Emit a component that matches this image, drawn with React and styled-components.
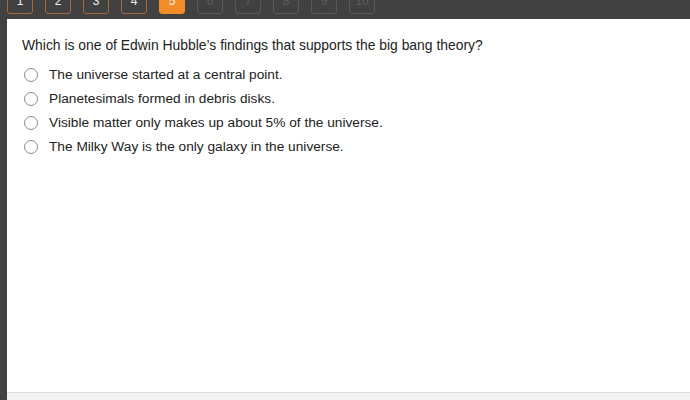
import React from "react";
import styled, { createGlobalStyle } from "styled-components";

const Global = createGlobalStyle`
  html, body { margin: 0; padding: 0; background: #404040; }
  body { font-family: "Liberation Sans", Arial, sans-serif; }
`;

const Page = styled.div`
  width: 690px;
  height: 400px;
  display: flex;
  flex-direction: column;
  overflow: hidden;
  background: #414141;
`;

const NavBar = styled.div`
  height: 19px;
  flex: none;
  display: flex;
  align-items: flex-end;
  gap: 12px;
  padding: 0 0 5px 7px;
  box-sizing: border-box;
  overflow: hidden;
`;

const PageButton = styled.div`
  flex: none;
  width: 26px;
  height: 26px;
  box-sizing: border-box;
  border-radius: 3px;
  display: flex;
  align-items: flex-start;
  justify-content: center;
  padding-top: 6px;
  font-size: 12px;
  line-height: 13px;
  border: 1px solid ${(p) => (p.$state === "done" ? "#a8683a" : p.$state === "active" ? "#f28c28" : "#575757")};
  background: ${(p) => (p.$state === "active" ? "#f28c28" : "transparent")};
  color: ${(p) => (p.$state === "todo" ? "#5c5c5c" : "#f2f2f2")};
`;

const Body = styled.div`
  flex: 1;
  display: flex;
  padding-left: 7px;
`;

const Card = styled.div`
  flex: 1;
  background: #ffffff;
  display: flex;
  flex-direction: column;
`;

const Content = styled.div`
  flex: 1;
  padding: 18px 0 0 15px;
`;

const Question = styled.div`
  font-size: 13.9px;
  line-height: 16px;
  color: #222;
  margin-bottom: 14px;
`;

const Options = styled.div`
  display: flex;
  flex-direction: column;
  gap: 8px;
  padding-left: 2px;
`;

const Option = styled.label`
  display: flex;
  align-items: center;
  gap: 11px;
  font-size: 13.7px;
  line-height: 16px;
  color: #222;
`;

const Radio = styled.span`
  width: 14px;
  height: 14px;
  box-sizing: border-box;
  border: 1.5px solid #8a8a8a;
  border-radius: 50%;
  background: #fff;
  flex: none;
`;

const Footer = styled.div`
  height: 7px;
  flex: none;
  border-top: 1px solid #dcdcdc;
  background: #f3f3f3;
`;

const pages = [1, 2, 3, 4, 5, 6, 7, 8, 9, 10];
const options = [
  "The universe started at a central point.",
  "Planetesimals formed in debris disks.",
  "Visible matter only makes up about 5% of the universe.",
  "The Milky Way is the only galaxy in the universe.",
];

export default function App() {
  return (
    <>
      <Global />
      <Page>
        <NavBar>
          {pages.map((n) => (
            <PageButton key={n} $state={n < 5 ? "done" : n === 5 ? "active" : "todo"}>
              {n}
            </PageButton>
          ))}
        </NavBar>
        <Body>
          <Card>
            <Content>
              <Question>Which is one of Edwin Hubble’s findings that supports the big bang theory?</Question>
              <Options>
                {options.map((o) => (
                  <Option key={o}>
                    <Radio />
                    {o}
                  </Option>
                ))}
              </Options>
            </Content>
            <Footer />
          </Card>
        </Body>
      </Page>
    </>
  );
}
